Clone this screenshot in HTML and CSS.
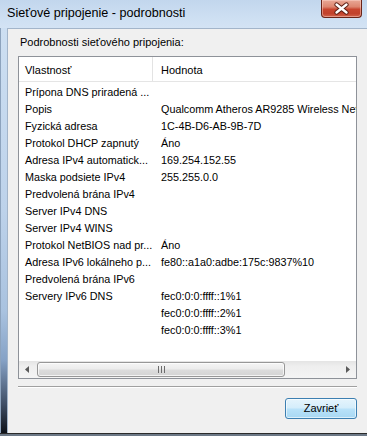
FILE: index.html
```html
<!DOCTYPE html>
<html lang="sk">
<head>
<meta charset="utf-8">
<title>Sieťové pripojenie - podrobnosti</title>
<link rel="stylesheet" href="styles.css">
</head>
<body>
<div class="window">
  <div class="titlebar">
    <div class="title">Sieťové pripojenie - podrobnosti</div>
    <div class="close">
      <svg width="39" height="17" viewBox="0 0 39 17">
        <path d="M14.5 4.5 L24.5 12.5 M24.5 4.5 L14.5 12.5" stroke="#5a1d12" stroke-width="4.4" stroke-linecap="round" fill="none"/>
        <path d="M14.5 4.5 L24.5 12.5 M24.5 4.5 L14.5 12.5" stroke="#ffffff" stroke-width="2.4" stroke-linecap="round" fill="none"/>
      </svg>
    </div>
  </div>
  <div class="main">
    <div class="frame-left"></div>
    <div class="client">
      <div class="label">Podrobnosti sieťového pripojenia:</div>
      <div class="list">
        <div class="header">
          <div class="h h1">Vlastnosť</div>
          <div class="h h2">Hodnota</div>
        </div>
        <div class="rows">
          <div class="row"><span class="c1">Prípona DNS priradená ...</span><span class="c2"></span></div>
          <div class="row"><span class="c1">Popis</span><span class="c2">Qualcomm Atheros AR9285 Wireless Network Adapter</span></div>
          <div class="row"><span class="c1">Fyzická adresa</span><span class="c2">1C-4B-D6-AB-9B-7D</span></div>
          <div class="row"><span class="c1">Protokol DHCP zapnutý</span><span class="c2">Áno</span></div>
          <div class="row"><span class="c1">Adresa IPv4 automatick...</span><span class="c2">169.254.152.55</span></div>
          <div class="row"><span class="c1">Maska podsiete IPv4</span><span class="c2">255.255.0.0</span></div>
          <div class="row"><span class="c1">Predvolená brána IPv4</span><span class="c2"></span></div>
          <div class="row"><span class="c1">Server IPv4 DNS</span><span class="c2"></span></div>
          <div class="row"><span class="c1">Server IPv4 WINS</span><span class="c2"></span></div>
          <div class="row"><span class="c1">Protokol NetBIOS nad pr...</span><span class="c2">Áno</span></div>
          <div class="row"><span class="c1">Adresa IPv6 lokálneho p...</span><span class="c2">fe80::a1a0:adbe:175c:9837%10</span></div>
          <div class="row"><span class="c1">Predvolená brána IPv6</span><span class="c2"></span></div>
          <div class="row"><span class="c1">Servery IPv6 DNS</span><span class="c2">fec0:0:0:ffff::1%1</span></div>
          <div class="row"><span class="c1"></span><span class="c2">fec0:0:0:ffff::2%1</span></div>
          <div class="row"><span class="c1"></span><span class="c2">fec0:0:0:ffff::3%1</span></div>
        </div>
        <div class="spacer"></div>
        <div class="hscroll">
          <div class="arrow">
            <svg width="17" height="17" viewBox="0 0 17 17"><path d="M6 8.5 L10 5 L10 12 Z" fill="#5a5a5a"/></svg>
          </div>
          <div class="track">
            <div class="thumb">
              <svg width="9" height="7" viewBox="0 0 9 7">
                <path d="M1.5 0 V7 M4.5 0 V7 M7.5 0 V7" stroke="#6b6b6b" stroke-width="1"/>
              </svg>
            </div>
          </div>
          <div class="arrow">
            <svg width="17" height="17" viewBox="0 0 17 17"><path d="M11 8.5 L7 5 L7 12 Z" fill="#5a5a5a"/></svg>
          </div>
        </div>
      </div>
      <div class="sep"></div>
      <div class="actions">
        <div class="button">Zavrieť</div>
      </div>
    </div>
  </div>
  <div class="frame-bottom"></div>
</div>
</body>
</html>
```

FILE: styles.css
```css
* { box-sizing: border-box; }

html, body {
  margin: 0;
  padding: 0;
}

body {
  width: 367px;
  height: 436px;
  overflow: hidden;
  font-family: "Liberation Sans", Arial, sans-serif;
  font-size: 11px;
  color: #000;
  background: #1e2530;
}

.window {
  display: flex;
  flex-direction: column;
  height: 436px;
}

.titlebar {
  height: 28px;
  flex: none;
  display: flex;
  align-items: flex-start;
  background: linear-gradient(to bottom, #c2d6ed 0%, #cddff2 60%, #d3e3f4 100%);
}

.title {
  font-size: 12.6px;
  line-height: 14px;
  padding: 6px 0 0 7px;
  color: #000;
}

.close {
  margin-left: auto;
  margin-right: 5px;
  width: 41px;
  height: 18px;
  border: 1px solid #6a2418;
  border-top: none;
  border-radius: 0 0 4px 4px;
  background: linear-gradient(to bottom, #e9a896 0%, #dd8670 40%, #c8452e 55%, #c2422c 80%, #d2644c 100%);
  box-shadow: inset 0 0 0 1px rgba(255, 220, 210, 0.45);
  display: flex;
  align-items: center;
  justify-content: center;
}

.close svg { display: block; }

.main {
  flex: 1;
  display: flex;
  min-height: 0;
}

.frame-left {
  width: 7px;
  flex: none;
  background: linear-gradient(to bottom, #cddff2 0%, #bdd2ea 45%, #a9c2df 70%, #86a2c6 82%, #3e4d64 93%, #0d1118 100%);
  box-shadow: inset 1px 0 0 #8da3bd;
}

.client {
  flex: 1;
  background: #f0f0f0;
  border-top: 1px solid #a3b5ca;
  border-left: 1px solid #a3b5ca;
  padding: 6px 10px 0 10px;
  display: flex;
  flex-direction: column;
}

.label {
  line-height: 15px;
  padding-left: 2px;
  margin-bottom: 6px;
}

.list {
  height: 323px;
  flex: none;
  border: 1px solid #8e9299;
  background: #fff;
  display: flex;
  flex-direction: column;
  overflow: hidden;
}

.header {
  height: 25px;
  flex: none;
  display: grid;
  grid-template-columns: 134px 1fr;
  border-bottom: 1px solid #e5e5e5;
}

.h {
  display: flex;
  align-items: center;
  padding-top: 2px;
}

.h1 {
  padding-left: 6px;
  border-right: 1px solid #e3e3e3;
}

.h2 { padding-left: 8px; }

.rows {
  padding-top: 2px;
  flex: none;
  font-size: 10.8px;
}

.row {
  height: 17px;
  line-height: 17px;
  display: grid;
  grid-template-columns: 134px 1fr;
  white-space: nowrap;
}

.row span { overflow: hidden; }

.c1 { padding-left: 6px; }
.c2 { padding-left: 8px; }

.spacer { flex: 1; }

.hscroll {
  height: 17px;
  flex: none;
  display: flex;
  background: linear-gradient(to bottom, #e4e4e4 0%, #eeeeee 30%, #f4f4f4 100%);
}

.arrow {
  width: 17px;
  height: 17px;
  flex: none;
}

.arrow svg { display: block; }

.track {
  flex: 1;
  padding: 1px 0;
  display: flex;
}

.thumb {
  width: 248px;
  margin-left: 1px;
  border: 1px solid #979797;
  border-radius: 3px;
  background: linear-gradient(to bottom, #f5f5f5 0%, #ececec 45%, #dcdcdc 55%, #d4d4d4 100%);
  box-shadow: inset 0 0 0 1px rgba(255, 255, 255, 0.7);
  display: flex;
  align-items: center;
  justify-content: center;
}

.thumb svg { display: block; }

.sep {
  margin-top: 7px;
  height: 2px;
  flex: none;
  border-top: 1px solid #a0a0a0;
  border-bottom: 1px solid #ffffff;
}

.actions {
  display: flex;
  justify-content: flex-end;
  margin-top: 10px;
}

.button {
  width: 72px;
  height: 21px;
  border: 1px solid #3c7fb1;
  border-radius: 3px;
  background: linear-gradient(to bottom, #e5f4fc 0%, #d4edfb 48%, #b9e2f9 52%, #a8d8f3 100%);
  box-shadow: inset 0 0 0 1px rgba(255, 255, 255, 0.6);
  display: flex;
  align-items: center;
  justify-content: center;
  line-height: 19px;
}

.frame-bottom {
  height: 3px;
  flex: none;
  border-top: 1px solid #2a2a2a;
  background: #6c7886;
}
```
